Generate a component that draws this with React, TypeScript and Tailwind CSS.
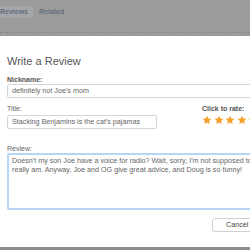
import React from "react";

const Star = () => (
  <svg width="10" height="10" viewBox="0 0 24 24" className="shrink-0">
    <path
      d="M12 1.5l3.1 7 7.6.7-5.8 5 1.8 7.4L12 17.7l-6.7 3.9 1.8-7.4-5.8-5 7.6-.7z"
      fill="#f7a02c"
    />
  </svg>
);

export default function App() {
  return (
    <div
      className="w-[250px] h-[250px] overflow-hidden relative bg-white"
      style={{ fontFamily: "'Liberation Sans', Arial, sans-serif" }}
    >
      {/* top overlay */}
      <div className="h-[36px] bg-[#9b9b9b] flex flex-col">
        <div className="flex items-center gap-[6px] pt-[6px]">
          <div className="h-[12px] w-[33px] bg-[#a4a6a9] flex items-center justify-end pr-[5px] text-[7px] font-semibold text-[#66707e]">
            Reviews
          </div>
          <div className="text-[7px] text-[#66707e] font-semibold">Related</div>
        </div>
        <div className="mt-[14px] border-b border-dashed border-[#8a8a8a]" />
      </div>

      {/* modal */}
      <div className="flex flex-col pl-[7px] pt-[19px]">
        <div className="h-[12px] text-[11px] text-[#555] font-light leading-[12px]">Write a Review</div>

        <div className="mt-[8px] h-[9px] text-[7px] text-[#555] font-bold leading-[9px]">Nickname:</div>
        <div className="h-[14px] border border-[#d6d6d6] rounded-[2px] flex items-center pl-[4px] text-[7.2px] text-[#666] w-[260px]">
          definitely not Joe's mom
        </div>

        <div className="flex mt-[6px]">
          <div className="flex flex-col">
            <div className="h-[9px] text-[7px] text-[#666] leading-[9px]">Title:</div>
            <div className="mt-[2px] h-[14px] w-[150px] border border-[#d6d6d6] rounded-[2px] flex items-center pl-[4px] text-[7.2px] text-[#666]">
              Stacking Benjamins is the cat's pajamas
            </div>
          </div>
          <div className="flex flex-col ml-[45px]">
            <div className="h-[9px] text-[7px] text-[#555] font-semibold leading-[9px]">Click to rate:</div>
            <div className="flex gap-[1.5px] mt-[2px]">
              <Star />
              <Star />
              <Star />
              <Star />
              <Star />
            </div>
          </div>
        </div>

        <div className="mt-[15px] h-[9px] text-[7px] text-[#666] leading-[9px]">Review:</div>
        <div className="h-[57px] w-[260px] border-2 border-[#b7d5f5] rounded-[2px] px-[3px] pt-[1px] text-[7.2px] text-[#666] leading-[9px] whitespace-nowrap overflow-hidden">
          Doesn't my son Joe have a voice for radio? Wait, sorry, I'm not supposed to tell anyone who I
          <br />
          really am. Anyway, Joe and OG give great advice, and Doug is so funny!
        </div>

        <div className="flex justify-end mt-[8px]">
          <div className="h-[14px] w-[44px] border border-[#d0d0d0] rounded-[3px] flex items-center pl-[13px] text-[7.2px] text-[#444] -mr-[6px]">
            Cancel
          </div>
        </div>
      </div>

      <div className="absolute left-0 right-0 bottom-0 h-[3px] bg-[#8e8e8e]" />
    </div>
  );
}
